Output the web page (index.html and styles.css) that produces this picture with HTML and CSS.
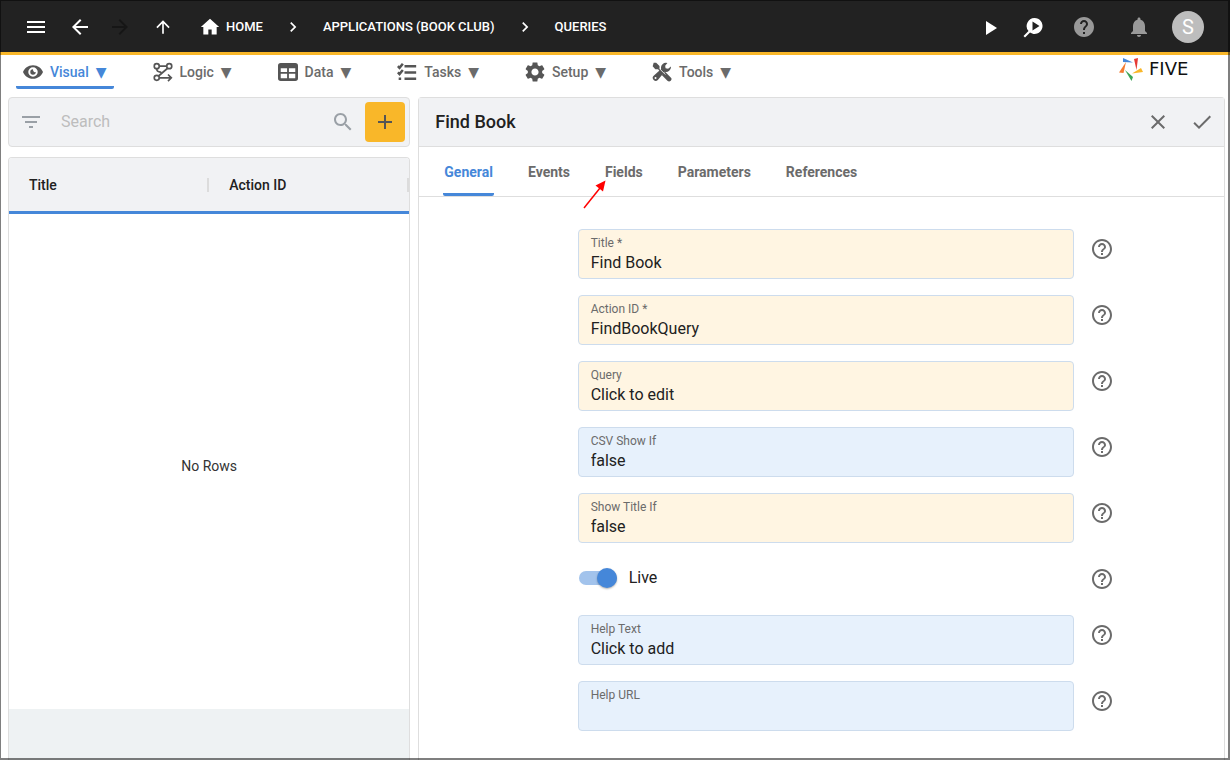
FILE: index.html
```html
<!DOCTYPE html>
<html lang="en">
<head>
<meta charset="utf-8">
<meta name="viewport" content="width=device-width, initial-scale=1">
<title>Find Book</title>
<link rel="stylesheet" href="styles.css">
</head>
<body>
<svg class="sprite" aria-hidden="true">
  <symbol id="help" viewBox="0 0 24 24"><path d="M11 18h2v-2h-2v2zm1-16C6.48 2 2 6.48 2 12s4.48 10 10 10 10-4.48 10-10S17.52 2 12 2zm0 18c-4.41 0-8-3.59-8-8s3.59-8 8-8 8 3.59 8 8-3.59 8-8 8zm0-14c-2.21 0-4 1.79-4 4h2c0-1.1.9-2 2-2s2 .9 2 2c0 2-3 1.75-3 5h2c0-2.25 3-2.5 3-5 0-2.210-1.790-4-4-4z"/></symbol>
  <symbol id="chevron" viewBox="0 0 24 24"><path d="M10 6 8.590 7.410 13.170 12l-4.580 4.590L10 18l6-6z"/></symbol>
</svg>
<div class="app">
  <header class="topbar">
    <div class="topbar-nav">
      <button class="icon-btn" aria-label="Menu"><svg class="icon" viewBox="0 0 24 24"><path d="M3 18h18v-2H3v2zm0-5h18v-2H3v2zm0-7v2h18V6H3z"/></svg></button>
      <button class="icon-btn" aria-label="Back"><svg class="icon" viewBox="0 0 24 24"><path d="M20 11H7.830l5.590-5.590L12 4l-8 8 8 8 1.410-1.410L7.830 13H20v-2z"/></svg></button>
      <button class="icon-btn forward" aria-label="Forward"><svg class="icon" viewBox="0 0 24 24"><path d="m12 4-1.410 1.410L16.170 11H4v2h12.170l-5.580 5.590L12 20l8-8z"/></svg></button>
      <button class="icon-btn up" aria-label="Up"><svg class="icon small" viewBox="0 0 24 24"><path d="m4 12 1.410 1.410L11 7.830V20h2V7.830l5.580 5.590L20 12l-8-8-8 8z"/></svg></button>
    </div>
    <nav class="crumbs" aria-label="Breadcrumb">
      <a class="crumb" href="#"><svg class="icon small" viewBox="0 0 24 24"><path d="M10 21v-6h4v6h6v-9h3L12 2 1 12h3v9z"/></svg>HOME</a>
      <svg class="icon small"><use href="#chevron"/></svg>
      <a class="crumb" href="#">APPLICATIONS (BOOK CLUB)</a>
      <svg class="icon small"><use href="#chevron"/></svg>
      <a class="crumb" href="#">QUERIES</a>
    </nav>
    <div class="topbar-actions">
      <button class="icon-btn" aria-label="Run"><svg class="icon" viewBox="0 0 24 24"><path d="M8 6v14l11-7z"/></svg></button>
      <button class="icon-btn" aria-label="Inspect"><svg class="icon" viewBox="0 0 24 24"><path fill-rule="evenodd" d="M13.500 3a8 8 0 1 1-4.500 14.600L4 22.600l-1.500-1.500 5-5A8 8 0 0 1 13.500 3zM11.500 6.500v9l7-4.500z"/></svg></button>
      <button class="icon-btn gray wide" aria-label="Help"><svg class="icon" viewBox="0 0 24 24"><path d="M12 2C6.480 2 2 6.480 2 12s4.480 10 10 10 10-4.480 10-10S17.520 2 12 2zm1 17h-2v-2h2v2zm2.070-7.750-.9.920C13.450 12.900 13 13.500 13 15h-2v-.5c0-1.100.450-2.100 1.170-2.830l1.240-1.260c.370-.36.590-.86.590-1.410 0-1.100-.9-2-2-2s-2 .9-2 2H8c0-2.210 1.790-4 4-4s4 1.790 4 4c0 .88-.36 1.680-.93 2.250z"/></svg></button>
      <button class="icon-btn gray bell" aria-label="Notifications"><svg class="icon" viewBox="0 0 24 24"><path d="M12 22c1.100 0 2-.9 2-2h-4c0 1.100.890 2 2 2zm6-6v-5c0-3.070-1.640-5.640-4.500-6.320V4c0-.83-.67-1.500-1.500-1.500s-1.500.670-1.500 1.500v.680C7.630 5.360 6 7.920 6 11v5l-2 2v1h16v-1l-2-2z"/></svg></button>
      <button class="avatar" aria-label="Account">S</button>
    </div>
  </header>

  <div class="menubar">
    <nav class="menus" aria-label="Main">
      <button class="menu active"><svg class="icon" viewBox="1 1 22 22"><path fill-rule="evenodd" d="M12 4.500C6.500 4.500 2.500 8 1 12c1.500 4 5.500 7.500 11 7.500S21.500 16 23 12c-1.500-4-5.500-7.500-11-7.500zm0 2.300a5.200 5.200 0 1 1 0 10.400 5.200 5.200 0 0 1 0-10.400zM12 9a3 3 0 1 0 3 3c-1.800.7-3-.8-3-3z"/></svg><span>Visual</span><span class="caret">▼</span></button>
      <button class="menu"><svg class="icon line" viewBox="0 0 24 24"><circle cx="4.500" cy="5" r="3"/><circle cx="19.500" cy="5" r="3"/><circle cx="4.500" cy="19" r="3"/><path d="M7.500 5h9M17.500 7.500 7 16.500M7.500 19H22M18 15l4 4-4 4M4.500 8c0 3 2 4.500 5.500 4"/></svg><span>Logic</span><span class="caret">▼</span></button>
      <button class="menu"><svg class="icon" viewBox="1 1 22 22"><path fill-rule="evenodd" d="M4 2h16a3 3 0 0 1 3 3v14a3 3 0 0 1-3 3H4a3 3 0 0 1-3-3V5a3 3 0 0 1 3-3zM4 8v4h7V8zm9 0v4h7V8zM4 14v5h7v-5zm9 0v5h7v-5z"/></svg><span>Data</span><span class="caret">▼</span></button>
      <button class="menu"><svg class="icon line tasks" viewBox="0 0 24 24"><path d="M9 5h14M9 12.500h14M9 20h14M1 5l2 2 4-5M1 12.500l2 2 4-5M2 20h3"/></svg><span>Tasks</span><span class="caret">▼</span></button>
      <button class="menu"><svg class="icon" viewBox="2 2 20 20"><path d="M19.140 12.940c.040-.3.060-.61.060-.94 0-.32-.02-.64-.07-.94l2.030-1.580c.180-.14.230-.41.120-.61l-1.920-3.320c-.12-.22-.37-.29-.59-.22l-2.390.960c-.5-.38-1.030-.7-1.620-.94l-.36-2.540c-.04-.24-.24-.41-.48-.41h-3.840c-.24 0-.43.170-.47.410l-.36 2.540c-.59.240-1.130.570-1.620.940l-2.390-.96c-.22-.08-.47 0-.59.220L2.740 8.870c-.12.210-.08.470.120.610l2.030 1.580c-.05.300-.09.630-.09.940s.020.640.070.940l-2.030 1.580c-.18.140-.23.410-.12.610l1.920 3.320c.120.220.370.290.590.220l2.390-.96c.5.380 1.030.7 1.620.940l.360 2.540c.050.240.240.410.480.410h3.840c.240 0 .440-.17.470-.41l.360-2.540c.590-.24 1.130-.56 1.620-.94l2.390.960c.220.080.470 0 .590-.22l1.920-3.320c.120-.22.070-.47-.12-.61l-2.010-1.580zM12 15.600c-1.980 0-3.600-1.620-3.600-3.600s1.620-3.600 3.600-3.600 3.600 1.620 3.600 3.600-1.620 3.600-3.600 3.600z"/></svg><span>Setup</span><span class="caret">▼</span></button>
      <button class="menu"><svg class="icon" viewBox="0 0 24 24"><path d="M2 1 5 .8l4 4v3l5 5 2-.8 6.500 6.500a2.500 2.500 0 0 1-4 4L12 16l.5-2-5.300-5.200H4L.8 5z"/><path fill-rule="evenodd" d="M22.800 5.500a6 6 0 0 1-7.500 6.200L7 21.500a3.500 3.500 0 0 1-5-5l9-8A6 6 0 0 1 18.500 1.200L15.800 4.500l.5 3 3 .5zM4.200 18a1.200 1.200 0 1 0 .1 2.400A1.200 1.200 0 0 0 4.200 18z"/><path class="gap-line" d="m9 8 7 7"/></svg><span>Tools</span><span class="caret">▼</span></button>
    </nav>
    <div class="brand">
      <svg class="brand-mark" viewBox="0 0 24 24"><path fill="#4587d9" d="M4 1l10 4.500L4 5z"/><path fill="#e53935" d="M15 2l4-1-1.500 12z"/><path fill="#f9b729" d="M24 15l-11 1.500 9-5.500z"/><path fill="#3ba557" d="M6 13l8 7-1.500 4z"/><path fill="#f47b30" d="M7 5 0 15.500l4.500.500z"/></svg>
      <span class="brand-name">FIVE</span>
    </div>
  </div>

  <main class="workspace">
    <section class="list-pane">
      <form class="search">
        <svg class="icon" viewBox="0 0 24 24"><path d="M10 18h4v-2h-4v2zM3 6v2h18V6H3zm3 7h12v-2H6v2z"/></svg>
        <input class="search-input" type="text" placeholder="Search" aria-label="Search">
        <svg class="icon" viewBox="0 0 24 24"><path d="M15.500 14h-.79l-.28-.27C15.410 12.590 16 11.110 16 9.500 16 5.910 13.090 3 9.500 3S3 5.910 3 9.500 5.910 16 9.500 16c1.610 0 3.090-.59 4.230-1.570l.270.280v.790l5 4.990L20.490 19l-4.990-5zm-6 0C7.010 14 5 11.990 5 9.500S7.010 5 9.500 5 14 7.010 14 9.500 11.990 14 9.500 14z"/></svg>
        <button class="add" type="button" aria-label="Add"><svg class="icon" viewBox="0 0 24 24"><path d="M19 13h-6v6h-2v-6H5v-2h6V5h2v6h6v2z"/></svg></button>
      </form>
      <div class="grid">
        <table class="grid-table">
          <thead><tr><th scope="col"><div class="th">Title</div></th><th scope="col"><div class="th">Action ID</div></th></tr></thead>
        </table>
        <p class="empty">No Rows</p>
        <div class="grid-footer"></div>
      </div>
    </section>

    <section class="detail">
      <div class="detail-head">
        <h1 class="detail-title">Find Book</h1>
        <button class="icon-btn plain" aria-label="Cancel"><svg class="icon" viewBox="0 0 24 24"><path d="M19 6.410 17.590 5 12 10.590 6.410 5 5 6.410 10.590 12 5 17.590 6.410 19 12 13.410 17.590 19 19 17.590 13.410 12z"/></svg></button>
        <button class="icon-btn plain" aria-label="Save"><svg class="icon" viewBox="0 0 24 24"><path d="M9 16.200 4.800 12l-1.400 1.400L9 19 21 7l-1.400-1.400z"/></svg></button>
      </div>
      <div class="tabs" role="tablist">
        <button class="tab active" role="tab" aria-selected="true">General</button>
        <button class="tab" role="tab">Events</button>
        <button class="tab pointed" role="tab">Fields<svg class="pointer" viewBox="0 0 26 30"><path d="M2 29 18 9" stroke="#f00" stroke-width="1.500" fill="none"/><path d="M23.500 1.500 21 12.500l-7.500-6z" fill="#f00"/></svg></button>
        <button class="tab" role="tab">Parameters</button>
        <button class="tab" role="tab">References</button>
      </div>
      <form class="fields">
        <div class="row"><div class="field warm"><label for="f1">Title *</label><input id="f1" type="text" value="Find Book"></div><button class="help" type="button" aria-label="Help: Title"><svg class="icon"><use href="#help"/></svg></button></div>
        <div class="row"><div class="field warm"><label for="f2">Action ID *</label><input id="f2" type="text" value="FindBookQuery"></div><button class="help" type="button" aria-label="Help: Action ID"><svg class="icon"><use href="#help"/></svg></button></div>
        <div class="row"><div class="field warm"><label for="f3">Query</label><input id="f3" type="text" value="Click to edit"></div><button class="help" type="button" aria-label="Help: Query"><svg class="icon"><use href="#help"/></svg></button></div>
        <div class="row"><div class="field"><label for="f4">CSV Show If</label><input id="f4" type="text" value="false"></div><button class="help" type="button" aria-label="Help: CSV Show If"><svg class="icon"><use href="#help"/></svg></button></div>
        <div class="row"><div class="field warm"><label for="f5">Show Title If</label><input id="f5" type="text" value="false"></div><button class="help" type="button" aria-label="Help: Show Title If"><svg class="icon"><use href="#help"/></svg></button></div>
        <div class="row"><div class="toggle"><input class="switch" id="f6" type="checkbox" role="switch" checked><label for="f6">Live</label></div><button class="help" type="button" aria-label="Help: Live"><svg class="icon"><use href="#help"/></svg></button></div>
        <div class="row"><div class="field"><label for="f7">Help Text</label><input id="f7" type="text" value="Click to add"></div><button class="help" type="button" aria-label="Help: Help Text"><svg class="icon"><use href="#help"/></svg></button></div>
        <div class="row"><div class="field"><label for="f8">Help URL</label><input id="f8" type="text" value=""></div><button class="help" type="button" aria-label="Help: Help URL"><svg class="icon"><use href="#help"/></svg></button></div>
      </form>
    </section>
  </main>
</div>
</body>
</html>
```
FILE: styles.css
```css
* { box-sizing: border-box; }

:root {
  --blue: #4587d9;
  --amber: #f9b729;
  --surface: #f1f2f4;
  --line: #dedede;
  --ink: #212121;
  --muted: #6b6b6b;
}

body {
  margin: 0;
  background: #fff;
  color: var(--ink);
  font: 14px/20px Roboto, sans-serif;
}

button, input { font: inherit; color: inherit; }

button {
  display: flex;
  align-items: center;
  justify-content: center;
  padding: 0;
  border: 0;
  background: none;
  cursor: pointer;
}

.sprite { display: none; }

.icon {
  display: block;
  flex: none;
  width: 24px;
  height: 24px;
  fill: currentColor;
}
.icon.small { width: 20px; height: 20px; }

.app {
  display: flex;
  flex-direction: column;
  height: 100vh;
  overflow: hidden;
}

/* window outline */
.app::after {
  content: "";
  position: fixed;
  inset: 0;
  border: solid rgba(0, 0, 0, .5);
  border-width: 1px 2px 2px 1px;
  pointer-events: none;
}

.topbar {
  display: flex;
  flex: none;
  align-items: center;
  height: 55px;
  padding: 2px 26px 0 16px;
  border-bottom: 3px solid var(--amber);
  background: #222;
  color: #fff;
}
.topbar-nav { display: flex; gap: 4px; }
.icon-btn { width: 40px; height: 40px; }
.icon-btn.forward { width: 32px; color: #161616; }
.icon-btn.up { width: 46px; }
.icon-btn.gray { color: #999; }
.icon-btn.plain { width: 44px; color: var(--muted); }

.crumbs {
  display: flex;
  flex: 1;
  align-items: center;
  gap: 20px;
  margin-left: 14px;
}
.crumb {
  display: flex;
  align-items: center;
  gap: 6px;
  color: #fff;
  font-size: 13px;
  font-weight: 500;
  text-decoration: none;
}

.topbar-actions { display: flex; align-items: center; gap: 3px; }
.icon-btn.wide { width: 56px; }
.icon-btn.bell { margin-left: 4px; }
.avatar {
  width: 32px;
  height: 32px;
  margin-left: 10px;
  border-radius: 50%;
  background: #bdbdbd;
  color: #fff;
  font-size: 20px;
}

.menubar {
  display: flex;
  flex: none;
  justify-content: space-between;
  height: 34px;
  padding: 0 21px 0 16px;
}
.menus { display: flex; gap: 32px; }
.menu {
  gap: 7px;
  padding: 2px 7px 0;
  border-bottom: 3px solid transparent;
  border-radius: 2px;
  color: var(--muted);
  font-weight: 500;
}
.menu .icon { width: 20px; height: 20px; color: #555; }
.menu.active { border-color: var(--blue); color: var(--blue); }
.menu .line { fill: none; stroke: currentColor; stroke-width: 2; }
.menu .tasks { stroke-width: 3; }
.gap-line { stroke: #fff; stroke-width: 1; }
.caret { font-family: "DejaVu Sans", sans-serif; font-size: 14px; }

.brand { display: flex; align-items: center; gap: 6px; height: 28px; }
.brand-mark { width: 24px; height: 24px; }
.brand-name {
  width: 60px;
  color: #111;
  font: 18px/24px "DejaVu Sans", sans-serif;
}

.workspace {
  display: flex;
  flex: 1;
  gap: 8px;
  min-height: 0;
  padding: 8px 5px 0 8px;
}

.list-pane {
  display: flex;
  flex: 1;
  flex-direction: column;
  gap: 10px;
  min-width: 0;
}
.search {
  display: flex;
  align-items: center;
  height: 50px;
  padding: 0 4px 0 10px;
  border: 1px solid var(--line);
  border-radius: 4px;
  background: var(--surface);
  color: #9aa0a6;
}
.search-input {
  flex: 1;
  min-width: 0;
  padding: 0 0 0 18px;
  border: 0;
  background: none;
  font-size: 16px;
}
.search-input::placeholder { color: #bdbdbd; }
.add {
  width: 40px;
  height: 40px;
  margin-left: 10px;
  border-radius: 4px;
  background: var(--amber);
  color: #555;
}

.grid {
  display: flex;
  flex: 1;
  flex-direction: column;
  border: 1px solid var(--line);
  border-bottom: 0;
  border-radius: 4px 4px 0 0;
  overflow: hidden;
}
.grid-table {
  width: 100%;
  border-collapse: separate;
  border-spacing: 0;
  table-layout: fixed;
  background: var(--surface);
}
.grid-table th {
  height: 56px;
  padding: 0;
  border-bottom: 3px solid var(--blue);
  font-weight: 500;
  text-align: left;
}
.th {
  height: 14px;
  padding-left: 20px;
  border-right: 2px solid #dcdcdc;
  line-height: 14px;
}
.empty {
  display: grid;
  flex: 1;
  place-items: center;
  margin: 0;
  padding-top: 8px;
  color: #333;
}
.grid-footer { height: 51px; background: #eef2f3; }

.detail {
  display: flex;
  flex: 2;
  flex-direction: column;
  min-width: 0;
  border: 1px solid var(--line);
  border-bottom: 0;
  border-radius: 4px 4px 0 0;
}
.detail-head {
  display: flex;
  align-items: center;
  height: 49px;
  padding-left: 16px;
  border-bottom: 1px solid var(--line);
  background: var(--surface);
}
.detail-title {
  flex: 1;
  margin: 0;
  font-size: 18px;
  font-weight: 500;
}
.tabs {
  display: flex;
  gap: 33px;
  height: 50px;
  padding-left: 24px;
  border-bottom: 1px solid var(--line);
}
.tab {
  padding: 4px 1px 0;
  border-bottom: 3px solid transparent;
  border-radius: 2px;
  color: var(--muted);
  font-weight: 700;
}
.tab.active { border-color: var(--blue); color: var(--blue); }
.tab.pointed { position: relative; }
.pointer {
  position: absolute;
  top: 32px;
  left: -22px;
  width: 26px;
  height: 30px;
}

.fields {
  display: flex;
  flex-direction: column;
  gap: 16px;
  width: 100%;
  max-width: 584px;
  margin: 0 auto;
  padding: 32px 0 0 48px;
}
.row { display: flex; gap: 16px; }
.field {
  display: flex;
  flex: 1;
  flex-direction: column;
  height: 50px;
  padding: 5px 12px;
  border: 1px solid #cddced;
  border-radius: 4px;
  background: #e7f1fc;
}
.field.warm { background: #fff5e2; }
.field label { color: var(--muted); font-size: 12px; line-height: 16px; }
.field input {
  width: 100%;
  height: 22px;
  padding: 0;
  border: 0;
  background: none;
  font-size: 16px;
}
.help { width: 24px; height: 40px; color: var(--muted); }

.toggle {
  display: flex;
  flex: 1;
  align-items: center;
  gap: 12px;
  padding: 0 0 2px 1px;
  font-size: 16px;
}
.switch {
  position: relative;
  width: 38px;
  height: 14px;
  margin: 0;
  border-radius: 7px;
  background: #a2c3ec;
  appearance: none;
}
.switch::after {
  content: "";
  position: absolute;
  top: -3px;
  right: 0;
  width: 20px;
  height: 20px;
  border-radius: 50%;
  background: var(--blue);
  box-shadow: 0 1px 2px rgba(0, 0, 0, .3);
}
```
